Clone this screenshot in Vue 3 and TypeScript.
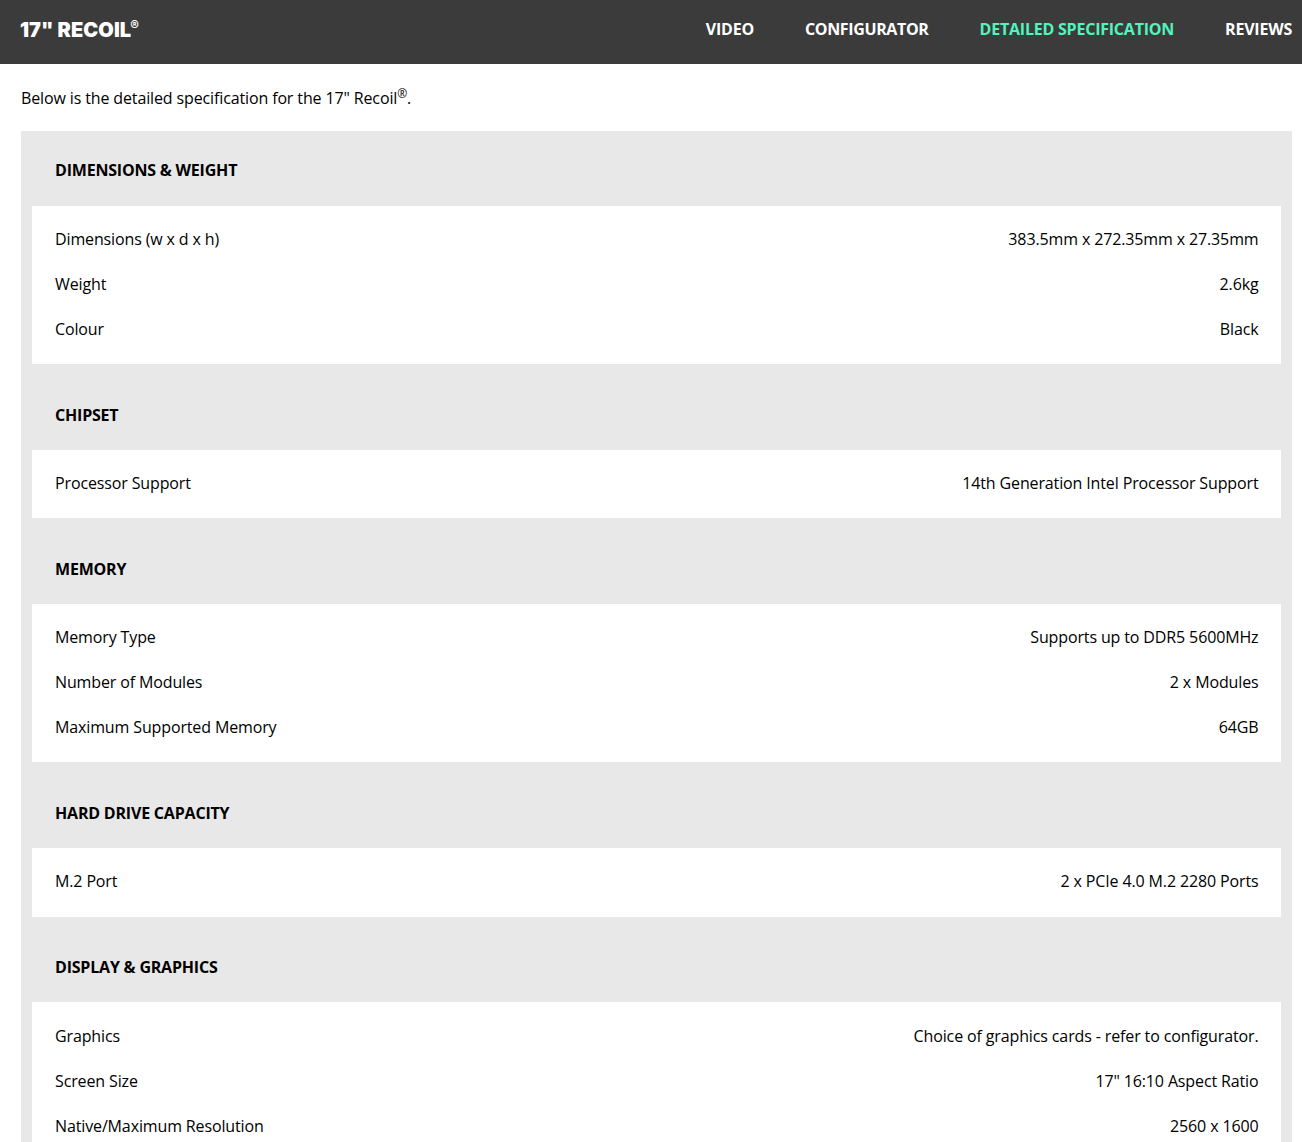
<script setup lang="ts">
interface Section {
  title: string
  rows: [string, string][]
}

const nav = [
  { label: 'VIDEO', active: false },
  { label: 'CONFIGURATOR', active: false },
  { label: 'DETAILED SPECIFICATION', active: true },
  { label: 'REVIEWS', active: false },
]

const sections: Section[] = [
  {
    title: 'DIMENSIONS & WEIGHT',
    rows: [
      ['Dimensions (w x d x h)', '383.5mm x 272.35mm x 27.35mm'],
      ['Weight', '2.6kg'],
      ['Colour', 'Black'],
    ],
  },
  { title: 'CHIPSET', rows: [['Processor Support', '14th Generation Intel Processor Support']] },
  {
    title: 'MEMORY',
    rows: [
      ['Memory Type', 'Supports up to DDR5 5600MHz'],
      ['Number of Modules', '2 x Modules'],
      ['Maximum Supported Memory', '64GB'],
    ],
  },
  { title: 'HARD DRIVE CAPACITY', rows: [['M.2 Port', '2 x PCIe 4.0 M.2 2280 Ports']] },
  {
    title: 'DISPLAY & GRAPHICS',
    rows: [
      ['Graphics', 'Choice of graphics cards - refer to configurator.'],
      ['Screen Size', '17" 16:10 Aspect Ratio'],
      ['Native/Maximum Resolution', '2560 x 1600'],
    ],
  },
]
</script>

<template>
  <div class="page">
    <header class="bar">
      <div class="logo">17" RECOIL<sup>®</sup></div>
      <nav class="nav">
        <a v-for="n in nav" :key="n.label" :class="{ active: n.active }">{{ n.label }}</a>
      </nav>
    </header>
    <main class="content">
      <p class="intro">Below is the detailed specification for the 17" Recoil<sup>®</sup>.</p>
      <div class="spec">
        <section v-for="(s, i) in sections" :key="s.title" class="group">
          <h3 :class="{ first: i === 0 }">{{ s.title }}</h3>
          <div class="card">
            <div v-for="r in s.rows" :key="r[0]" class="row">
              <span>{{ r[0] }}</span>
              <span>{{ r[1] }}</span>
            </div>
          </div>
        </section>
      </div>
    </main>
  </div>
</template>

<style>
html, body { margin: 0; background: #fff; }
</style>

<style scoped>
.page {
  font-family: "Open Sans", sans-serif;
  color: #000;
  font-size: 16px;
  letter-spacing: -0.13px;
  height: 1142px;
  overflow: hidden;
}
.bar {
  height: 64px;
  background: #3b3b3b;
  display: flex;
  align-items: center;
  justify-content: space-between;
  padding: 0 10px 6px 20px;
  box-sizing: border-box;
}
.logo {
  font-family: Inter, sans-serif;
  font-weight: 900;
  font-size: 20px;
  color: #fff;
  letter-spacing: 0.05px;
  margin-top: 2px;
}
.logo sup {
  font-size: 13px;
  font-weight: 700;
  line-height: 0;
  vertical-align: baseline;
  position: relative;
  top: -7px;
  margin-left: -1px;
}
.nav {
  display: flex;
  gap: 51px;
}
.nav a {
  color: #fff;
  font-weight: 700;
  font-size: 16px;
  letter-spacing: -0.22px;
}
.nav a:nth-child(2) { letter-spacing: -0.35px; }
.nav a.active { color: #50f5bd; }
.content { padding: 0 10px 0 21px; }
.intro {
  margin: 0;
  height: 67px;
  padding-top: 22px;
  box-sizing: border-box;
  line-height: 24px;
}
.intro sup {
  font-size: 12px;
  line-height: 0;
}
.spec {
  background: #e8e8e8;
  padding: 0 11px;
}
h3 {
  margin: 0;
  height: 85.8px;
  box-sizing: border-box;
  padding: 0 23px 24px;
  display: flex;
  align-items: flex-end;
  font-size: 16px;
  line-height: 22px;
  font-weight: 700;
  letter-spacing: -0.2px;
}
h3.first { height: 74.6px; padding-bottom: 25px; }
.card {
  background: #fff;
  padding: 11.05px 22.5px 12.75px 23px;
}
.group:last-child .card { padding-top: 11.6px; }
.row {
  display: flex;
  justify-content: space-between;
  height: 44.8px;
  align-items: center;
}
</style>
